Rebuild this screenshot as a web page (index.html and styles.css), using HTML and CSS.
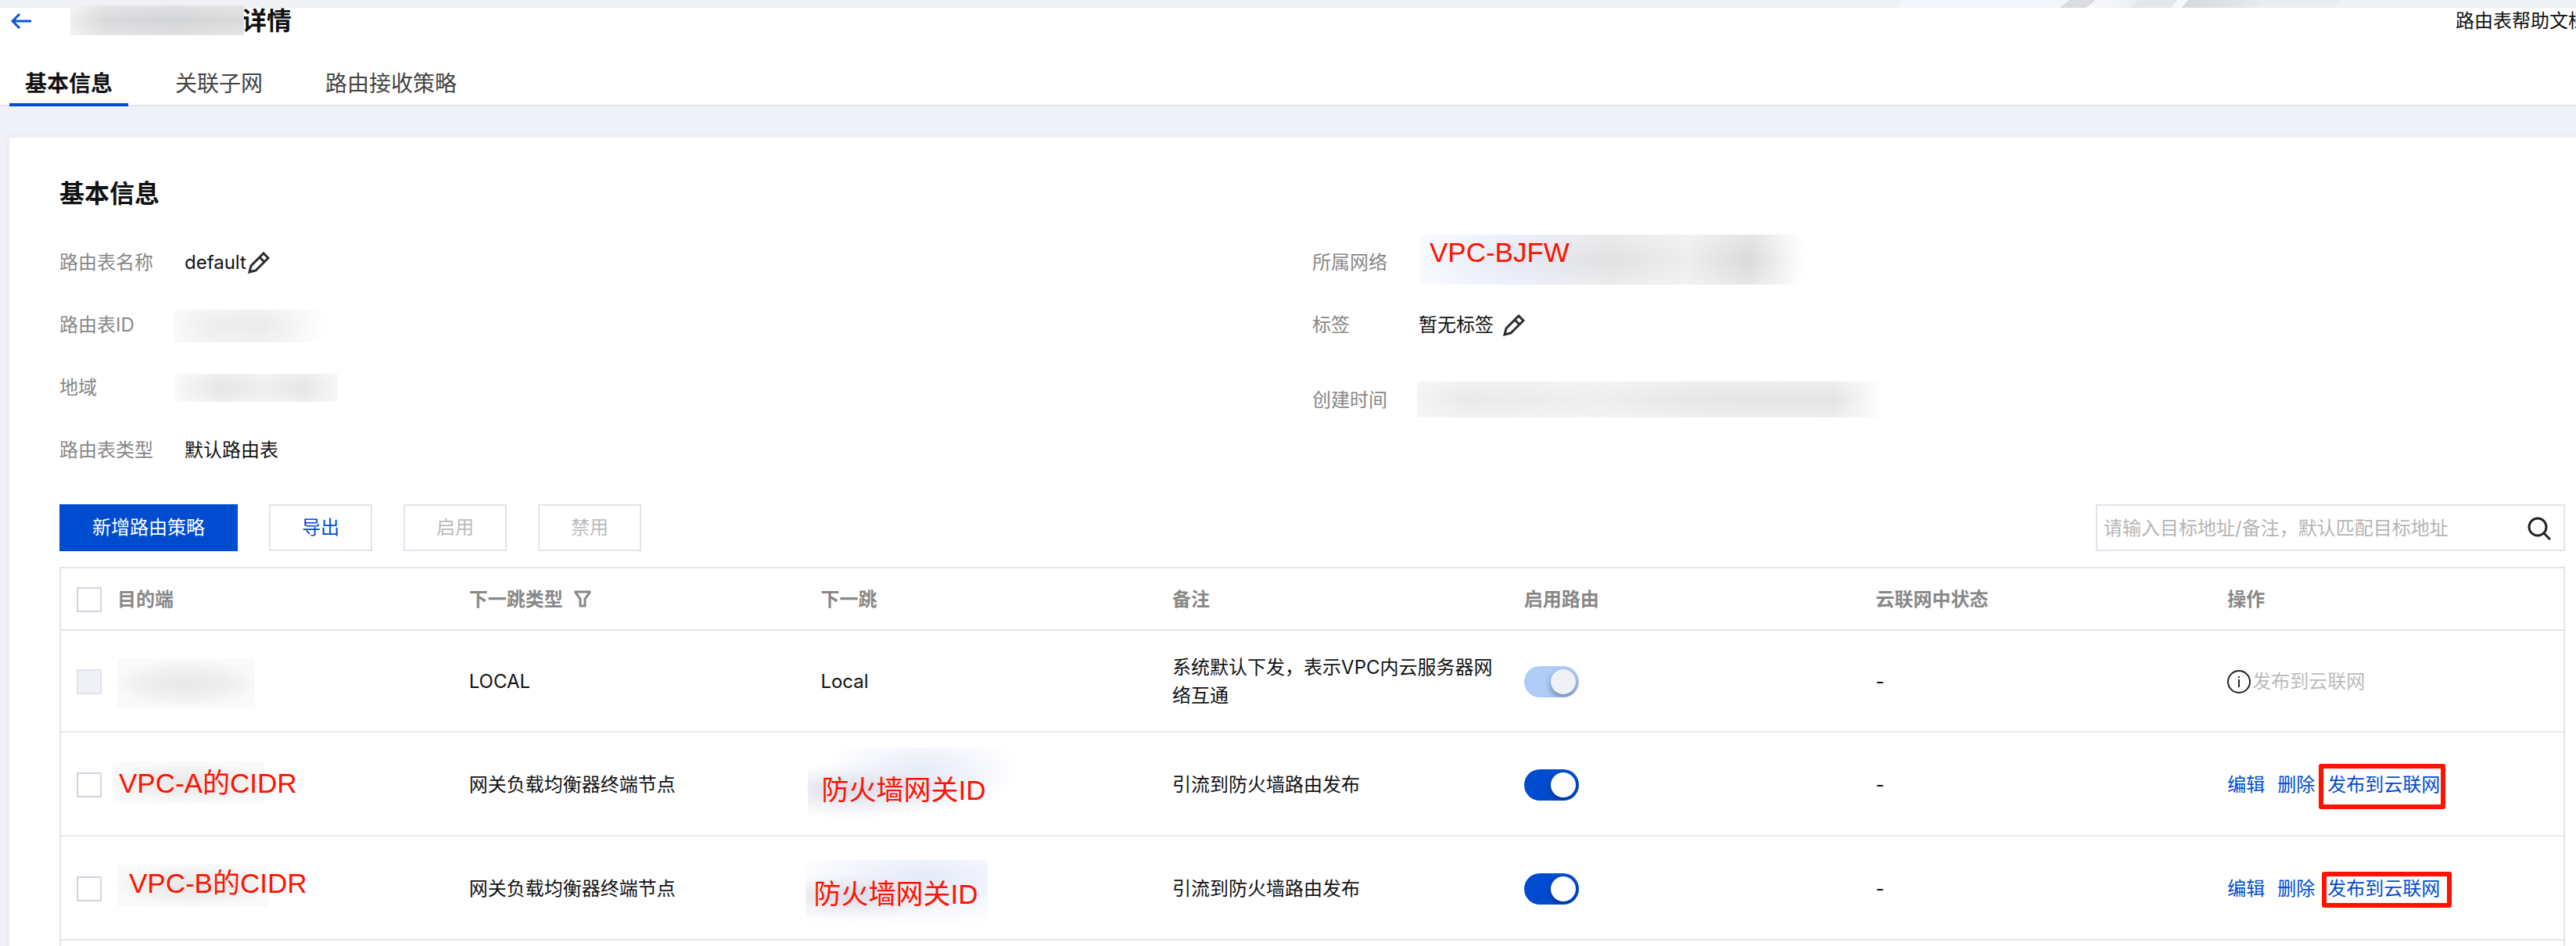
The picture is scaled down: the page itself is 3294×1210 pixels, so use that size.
FILE: index.html
```html
<!DOCTYPE html>
<html lang="zh-CN">
<head>
    <meta charset="UTF-8">
    <meta name="viewport" content="width=device-width, initial-scale=1.0">
    <title>路由表详情</title>
    <link rel="stylesheet" href="styles.css">
</head>
<body>
    <div class="banner">
        <svg class="banner-art" width="940" height="10" viewBox="0 0 940 10">
            <defs>
                <linearGradient id="fade"><stop offset="0" stop-color="#d5d9de"/><stop offset="1" stop-color="#ebedf2"/></linearGradient>
                <linearGradient id="shine"><stop offset="0" stop-color="#f9faff"/><stop offset="1" stop-color="#eceef3"/></linearGradient>
            </defs>
            <path d="M78 0H292L282 10H72Z" fill="#f4f6fc"/>
            <path d="M292 0H326L314 10H280Z" fill="#dadce0"/>
            <path d="M326 0H380L370 10H314Z" fill="url(#shine)"/>
            <path d="M380 0H430L422 10H370Z" fill="#e4e6eb"/>
            <path d="M430 0H444L436 10H422Z" fill="#f6f7fb"/>
            <path d="M444 0H550L530 10H436Z" fill="url(#fade)"/>
            <path d="M550 0H640L630 10H530Z" fill="#ecedf2"/>
        </svg>
    </div>
    <header class="header">
        <div class="title-bar">
            <a class="back" href="#" aria-label="返回">
                <svg width="26" height="20" viewBox="0 0 26 20" fill="none" stroke="#0a55d8" stroke-width="3"><path d="M26 10H2M11 1L2 10L11 19"/></svg>
            </a>
            <h1 class="title"><span class="mask mask-title"></span>详情</h1>
            <a class="help" href="#">路由表帮助文档</a>
        </div>
        <nav class="tabs">
            <a class="tab active" href="#">基本信息</a>
            <a class="tab" href="#">关联子网</a>
            <a class="tab" href="#">路由接收策略</a>
        </nav>
    </header>
    <main class="panel">
        <h2 class="panel-title">基本信息</h2>
        <div class="info">
            <dl class="info-col">
                <div class="info-row"><dt>路由表名称</dt><dd>default<button class="edit" aria-label="编辑名称"><svg width="28" height="28" viewBox="0 0 28 28" fill="none" stroke="#2b2b2b" stroke-width="3"><path d="M2 26L4 18L20 2L26 8L10 24ZM15 7L21 13"/></svg></button></dd></div>
                <div class="info-row"><dt>路由表ID</dt><dd><span class="mask mask-id"></span></dd></div>
                <div class="info-row"><dt>地域</dt><dd><span class="mask mask-region"></span></dd></div>
                <div class="info-row"><dt>路由表类型</dt><dd>默认路由表</dd></div>
            </dl>
            <dl class="info-col narrow">
                <div class="info-row"><dt>所属网络</dt><dd><span class="mask mask-vpc"></span><span class="note note-vpc">VPC-BJFW</span></dd></div>
                <div class="info-row"><dt>标签</dt><dd>暂无标签<button class="edit spaced" aria-label="编辑标签"><svg width="28" height="28" viewBox="0 0 28 28" fill="none" stroke="#2b2b2b" stroke-width="3"><path d="M2 26L4 18L20 2L26 8L10 24ZM15 7L21 13"/></svg></button></dd></div>
                <div class="info-row late"><dt>创建时间</dt><dd><span class="mask mask-time"></span></dd></div>
            </dl>
        </div>
        <div class="toolbar">
            <button class="btn primary">新增路由策略</button>
            <button class="btn">导出</button>
            <button class="btn" disabled>启用</button>
            <button class="btn" disabled>禁用</button>
            <div class="search">
                <input type="text" aria-label="搜索" placeholder="请输入目标地址/备注，默认匹配目标地址">
                <button class="search-btn" aria-label="搜索"><svg width="30" height="30" viewBox="0 0 30 30" fill="none" stroke="#222" stroke-width="3"><circle cx="13" cy="13" r="11"/><path d="M20 20L29 29"/></svg></button>
            </div>
        </div>
        <table class="routes">
            <thead>
                <tr>
                    <th class="check"><input type="checkbox" aria-label="全选"></th>
                    <th>目的端</th>
                    <th>下一跳类型<svg class="filter" width="22" height="22" viewBox="0 0 22 22" fill="none" stroke="#888" stroke-width="3"><path d="M2 2H20V3L14 11V20H8V11L2 3Z"/></svg></th>
                    <th>下一跳</th>
                    <th>备注</th>
                    <th>启用路由</th>
                    <th>云联网中状态</th>
                    <th>操作</th>
                </tr>
            </thead>
            <tbody>
                <tr class="system">
                    <td class="check"><input type="checkbox" aria-label="选择" disabled></td>
                    <td><span class="mask mask-local"></span></td>
                    <td>LOCAL</td>
                    <td>Local</td>
                    <td>系统默认下发，表示VPC内云服务器网络互通</td>
                    <td><input class="switch" type="checkbox" aria-label="启用路由" checked disabled></td>
                    <td>-</td>
                    <td><div class="actions off"><svg width="30" height="30" viewBox="0 0 30 30" fill="none" stroke="#222" stroke-width="2"><circle cx="15" cy="15" r="14"/><path d="M15 12V22M15 8V10"/></svg><span>发布到云联网</span></div></td>
                </tr>
                <tr>
                    <td class="check"><input type="checkbox" aria-label="选择"></td>
                    <td><span class="mask mask-cidr-a"></span><span class="note note-cidr-a">VPC-A的CIDR</span></td>
                    <td>网关负载均衡器终端节点</td>
                    <td><span class="mask mask-gw-a"></span><span class="note note-gw-a">防火墙网关ID</span></td>
                    <td>引流到防火墙路由发布</td>
                    <td><input class="switch" type="checkbox" aria-label="启用路由" checked></td>
                    <td>-</td>
                    <td><div class="actions"><a href="#">编辑</a><a href="#">删除</a><a class="publish" href="#">发布到云联网<span class="frame frame-a"></span></a></div></td>
                </tr>
                <tr>
                    <td class="check"><input type="checkbox" aria-label="选择"></td>
                    <td><span class="mask mask-cidr-b"></span><span class="note note-cidr-b">VPC-B的CIDR</span></td>
                    <td>网关负载均衡器终端节点</td>
                    <td><span class="mask mask-gw-b"></span><span class="note note-gw-b">防火墙网关ID</span></td>
                    <td>引流到防火墙路由发布</td>
                    <td><input class="switch" type="checkbox" aria-label="启用路由" checked></td>
                    <td>-</td>
                    <td><div class="actions"><a href="#">编辑</a><a href="#">删除</a><a class="publish" href="#">发布到云联网<span class="frame frame-b"></span></a></div></td>
                </tr>
                <tr class="next"><td colspan="8"></td></tr>
            </tbody>
        </table>
    </main>
</body>
</html>
```
FILE: styles.css
```css
* {
    padding: 0;
    margin: 0;
    box-sizing: border-box;
}
html {
    overflow: hidden;
}
body {
    font-family: Inter, "Noto Sans CJK SC", sans-serif;
    font-size: 24px;
    line-height: 36px;
    color: #111;
    background-color: #f0f1f6;
}
a {
    color: #004cd0;
    text-decoration: none;
}
button, input {
    font: inherit;
}
.banner {
    display: flex;
    justify-content: flex-end;
    height: 10px;
}
.header {
    background-color: #fff;
    box-shadow: inset 0 -2px #e1e4ea;
}
.title-bar {
    display: flex;
    align-items: center;
    height: 68px;
    padding: 0 0 34px 14px;
}
.back {
    display: flex;
}
.title {
    position: relative;
    margin-left: 269px;
    font-size: 32px;
    line-height: 32px;
}
.help {
    margin: 0 -14px 0 auto;
    color: #111;
}
.tabs {
    display: flex;
    gap: 40px;
    padding-left: 12px;
}
.tab {
    padding: 12px 20px 8px;
    font-size: 28px;
    line-height: 34px;
    color: #444;
    border-bottom: 4px solid transparent;
}
.tab.active {
    color: #111;
    font-weight: bold;
    border-color: #004cd0;
}
.panel {
    margin: 40px 0 0 12px;
    padding: 48px 14px 0 64px;
    background-color: #fff;
    box-shadow: 0 0 8px rgba(40, 50, 90, 0.06);
}
.panel-title {
    font-size: 32px;
    line-height: 48px;
}
.info {
    display: grid;
    grid-template-columns: 1fr 1fr;
    padding-top: 46px;
}
.info-row {
    display: flex;
    height: 80px;
}
.info-row.late {
    padding-top: 16px;
}
dt {
    width: 160px;
    color: #888;
}
.narrow dt {
    width: 136px;
}
dd {
    position: relative;
    display: flex;
    align-items: center;
    height: 36px;
}
.edit {
    display: flex;
    margin-left: 2px;
    border: 0;
    background: none;
}
.edit.spaced {
    margin-left: 12px;
}

/* toolbar */
.toolbar {
    display: flex;
    gap: 40px;
    padding: 7px 0 20px;
}
.btn {
    height: 60px;
    padding: 0 40px;
    border: 2px solid #e1e4eb;
    background-color: #fff;
    color: #004cd0;
}
.btn.primary {
    border-color: #004cd0;
    background-color: #004cd0;
    color: #fff;
}
.btn:disabled {
    color: #bbb;
}
.search {
    display: flex;
    align-items: center;
    width: 600px;
    height: 60px;
    margin-left: auto;
    padding: 2px 16px 0 8px;
    border: 2px solid #e1e4eb;
}
.search input {
    flex: 1;
    border: 0;
    outline: 0;
    background: none;
}
.search input::placeholder {
    color: #b5b5b5;
}
.search-btn {
    display: flex;
    border: 0;
    background: none;
}

/* table */
.routes {
    width: 100%;
    table-layout: fixed;
    border-spacing: 0;
    border: 2px solid #e1e4eb;
    border-bottom: 0;
}
th, td {
    position: relative;
    height: 133px;
    padding: 2px 20px 0;
    text-align: left;
    border-bottom: 2px solid #e5e9ee;
}
th {
    height: 80px;
    color: #888;
    border-color: #e1e4eb;
}
.system td {
    height: 130px;
}
.next td {
    height: 60px;
}
.check {
    width: 52px;
    padding-right: 0;
}
.check input {
    display: block;
    appearance: none;
    width: 32px;
    height: 32px;
    border: 2px solid #cfd5e2;
    background-color: #fff;
}
.check input:disabled {
    border-color: #e1e4eb;
    background-color: #f0f1f6;
}
.filter {
    margin-left: 14px;
    vertical-align: -2px;
}
.switch {
    display: flex;
    align-items: center;
    justify-content: flex-end;
    appearance: none;
    width: 70px;
    height: 40px;
    padding: 4px;
    border-radius: 20px;
    background-color: #004cd0;
    overflow: hidden;
}
.switch::before {
    content: "";
    width: 32px;
    height: 32px;
    border-radius: 50%;
    background-color: #fff;
    box-shadow: 0 4px 8px rgba(0, 20, 60, 0.4);
}
.switch:disabled {
    background-color: #b0cdf8;
}
.switch:disabled::before {
    background-color: #f0f1f6;
}
.actions {
    display: flex;
    align-items: center;
    gap: 16px;
}
.actions.off {
    gap: 2px;
    color: #bbb;
}
.publish {
    position: relative;
}

/* blurred values and red marks over the page */
.mask, .note, .frame {
    position: absolute;
}
.mask {
    background: radial-gradient(closest-side, #e8e8e8, #eee 60%, #f8f8f8);
}
.mask::after {
    content: "";
    position: absolute;
    inset: 0;
    background: linear-gradient(rgba(255, 255, 255, 0.3), transparent 50%, rgba(255, 255, 255, 0.3));
}
.note {
    font-family: "Liberation Sans", "Noto Sans CJK SC", sans-serif;
    font-size: 35px;
    line-height: 40px;
    color: #ff1200;
    white-space: nowrap;
}
.frame {
    border: 6px solid #ff1200;
    border-radius: 3px;
}
.mask-title {
    right: 61px;
    top: -4px;
    width: 222px;
    height: 38px;
    background: linear-gradient(90deg, #eee, #d8d9db 20%, #d3d4d6 60%, #d9dadb);
}
.mask-id {
    left: -14px;
    top: -2px;
    width: 194px;
    height: 42px;
    background: linear-gradient(90deg, #f9f9f9, #ededed 25%, #ebebeb 60%, #fff);
}
.mask-region {
    left: -12px;
    top: 0;
    width: 208px;
    height: 36px;
    background: linear-gradient(90deg, #f8f8f8, #e6e6e6 28%, #eee 55%, #e6e6e6 80%, #f6f6f6);
}
.mask-vpc {
    left: 2px;
    top: -18px;
    width: 490px;
    height: 64px;
    background: linear-gradient(90deg, #f7f9fe, #e5eaf8 22%, #e2e2e2 50%, #ededed 70%, #dadada 86%, #fff);
}
.mask-time {
    left: -2px;
    top: -6px;
    width: 592px;
    height: 46px;
    background: linear-gradient(90deg, #f4f4f4, #eaeaea 10%, #eee 40%, #e7e7e7 60%, #e5e5e5 90%, #fdfdfd);
}
.mask-local {
    left: 20px;
    top: 35px;
    width: 176px;
    height: 64px;
}
.mask-cidr-a {
    left: 14px;
    top: 37px;
    width: 194px;
    height: 54px;
}
.mask-cidr-b {
    left: 20px;
    top: 36px;
    width: 194px;
    height: 54px;
}
.mask-gw-a {
    left: 4px;
    top: 19px;
    width: 266px;
    height: 94px;
    background: radial-gradient(ellipse at 22% 60%, #d9dce6, transparent 45%), radial-gradient(ellipse at 55% 30%, #e2e8f7, #fff 60%);
}
.mask-gw-b {
    left: 1px;
    top: 30px;
    width: 233px;
    height: 80px;
    background: radial-gradient(ellipse at 25% 60%, #d9dce6, transparent 45%), radial-gradient(ellipse at 65% 25%, #e0e6f7, #fcfdff 75%);
}
.note-vpc {
    left: 14px;
    top: -15px;
}
.note-cidr-a {
    left: 22px;
    top: 45px;
}
.note-cidr-b {
    left: 35px;
    top: 40px;
}
.note-gw-a {
    left: 21px;
    top: 54px;
}
.note-gw-b {
    left: 11px;
    top: 54px;
}
.frame-a {
    left: -11px;
    top: -9px;
    width: 162px;
    height: 58px;
}
.frame-b {
    left: -7px;
    top: -4px;
    width: 166px;
    height: 46px;
}
```
